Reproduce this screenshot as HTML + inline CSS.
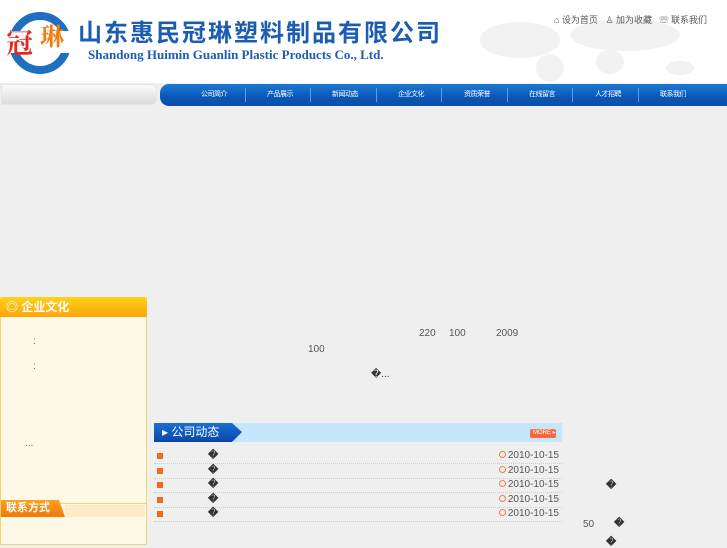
<!DOCTYPE html>
<html><head><meta charset="utf-8"><style>
*{margin:0;padding:0;box-sizing:border-box}
body{width:727px;height:545px;overflow:hidden;background:#efefef;font-family:"Liberation Sans","Noto Sans CJK SC",sans-serif;position:relative;font-size:10px;color:#555}
.a{position:absolute}
#hdr{left:0;top:0;width:727px;height:83px;background:#fff}
.nav{left:160px;top:84px;width:567px;height:22px;border-radius:9px 0 0 9px;background:linear-gradient(#1a7bd4,#0a56b8 60%,#0b4fa8)}
.nav span{position:absolute;top:5px;color:#fff;font-size:7px;letter-spacing:-0.5px;line-height:12px;white-space:nowrap}
.sep{position:absolute;top:4px;width:1px;height:14px;background:#5f9de0}
.gl{left:1px;top:84px;width:156px;height:21px;border-radius:0 6px 6px 0;background:linear-gradient(#fafafa,#dcdcdc);border:1px solid #e6e6e6}
.dots{border-bottom:1px dotted #ccc}
.row{position:absolute;left:154px;width:408px;height:15px}
.sq{position:absolute;left:3px;top:4px;width:6px;height:6px;background:#f06a1d}
.q{position:absolute;left:54px;top:1px;font-size:10px;color:#333;font-weight:bold;line-height:12px}
.dt{position:absolute;right:3px;top:1px;color:#555;font-size:10px;line-height:12px}
.dt:before{content:"";display:inline-block;width:5px;height:5px;border:1px solid #f08040;border-radius:50%;margin-right:2px}
</style></head><body>
<div id="hdr" class="a"></div>
<svg class="a" style="left:440px;top:10px" width="287" height="72"><g fill="#f2f2f2"><ellipse cx="80" cy="30" rx="40" ry="18"/><ellipse cx="110" cy="58" rx="14" ry="14"/><ellipse cx="185" cy="25" rx="55" ry="16"/><ellipse cx="170" cy="52" rx="14" ry="12"/><ellipse cx="240" cy="58" rx="14" ry="7"/></g></svg>
<svg class="a" style="left:8px;top:11px" width="64" height="64"><circle cx="32" cy="32" r="27" fill="none" stroke="#1e6fc0" stroke-width="8"/><rect x="0" y="20" width="64" height="22" fill="#fff"/></svg>
<div class="a" style="left:6px;top:24px;font-size:27px;color:#e52a1c;font-weight:bold;font-family:'Noto Serif CJK SC',serif;line-height:36px">冠</div>
<div class="a" style="left:40px;top:19px;font-size:24px;color:#f07d12;font-weight:bold;font-family:'Noto Serif CJK SC',serif;line-height:32px">琳</div>
<div class="a" style="left:78px;top:15px;font-size:24px;color:#1b5db3;font-weight:bold;letter-spacing:2px;line-height:32px;font-family:'Noto Sans CJK SC',sans-serif;white-space:nowrap">山东惠民冠琳塑料制品有限公司</div>
<div class="a" style="left:88px;top:47px;font-size:13px;color:#1b5db3;font-weight:bold;font-family:'Liberation Serif',serif;white-space:nowrap">Shandong Huimin Guanlin Plastic Products Co., Ltd.</div>
<div class="a" style="left:554px;top:14px;font-size:9px;color:#555;white-space:nowrap;line-height:12px">⌂ 设为首页 &nbsp; ♙ 加为收藏 &nbsp; ☏ 联系我们</div>
<div class="a gl"></div>
<div class="a nav">
<span style="left:41px">公司简介</span><div class="sep" style="left:85px"></div>
<span style="left:107px">产品展示</span><div class="sep" style="left:150px"></div>
<span style="left:172px">新闻动态</span><div class="sep" style="left:216px"></div>
<span style="left:238px">企业文化</span><div class="sep" style="left:281px"></div>
<span style="left:304px">资质荣誉</span><div class="sep" style="left:347px"></div>
<span style="left:369px">在线留言</span><div class="sep" style="left:412px"></div>
<span style="left:435px">人才招聘</span><div class="sep" style="left:478px"></div>
<span style="left:500px">联系我们</span>
</div>
<div class="a" style="left:0;top:297px;width:147px;height:248px;background:#fef8e6;border:1px solid #f6d36a;border-top:none"></div>
<div class="a" style="left:0;top:297px;width:147px;height:20px;background:linear-gradient(#ffd21a,#fca40a);border-radius:3px 3px 0 0;color:#fff;font-size:12px;font-weight:bold;padding:2px 0 0 6px;line-height:16px">◎ 企业文化</div>
<div class="a" style="left:33px;top:336px;color:#666">:</div>
<div class="a" style="left:33px;top:361px;color:#666">:</div>
<div class="a" style="left:25px;top:438px;color:#666">...</div>
<div class="a" style="left:1px;top:503px;width:145px;height:1px;background:#f6d36a"></div>
<div class="a" style="left:1px;top:500px;width:64px;height:17px;background:linear-gradient(#ffa020,#f07a08);clip-path:polygon(0 0,58px 0,64px 17px,0 17px);color:#fff;font-size:11px;font-weight:bold;padding:1px 0 0 5px;line-height:14px">联系方式</div>
<div class="a" style="left:65px;top:505px;width:80px;height:12px;background:#fcebc8"></div>
<div class="a" style="left:419px;top:328px">220</div>
<div class="a" style="left:449px;top:328px">100</div>
<div class="a" style="left:496px;top:328px">2009</div>
<div class="a" style="left:308px;top:344px">100</div>
<div class="a" style="left:371px;top:369px;color:#333">�...</div>
<div class="a" style="left:154px;top:423px;width:408px;height:19px;background:#c5e6fb"></div>
<div class="a" style="left:154px;top:423px;width:88px;height:19px;background:linear-gradient(#1a6fd4,#0a47a8);clip-path:polygon(0 0,78px 0,88px 9px,78px 19px,0 19px);color:#fff;font-size:12px;padding:2px 0 0 8px;line-height:15px">▸ 公司动态</div>
<div class="a" style="left:530px;top:429px;width:26px;height:9px;background:#f56b3e;border-radius:2px;color:#fff;font-size:6px;line-height:9px;padding-left:3px">MORE ▸</div>
<div class="row dots" style="top:449px"><div class="sq"></div><div class="q">�</div><div class="dt">2010-10-15</div></div>
<div class="row dots" style="top:464px"><div class="sq"></div><div class="q">�</div><div class="dt">2010-10-15</div></div>
<div class="row dots" style="top:478px"><div class="sq"></div><div class="q">�</div><div class="dt">2010-10-15</div></div>
<div class="row dots" style="top:493px"><div class="sq"></div><div class="q">�</div><div class="dt">2010-10-15</div></div>
<div class="row dots" style="top:507px"><div class="sq"></div><div class="q">�</div><div class="dt">2010-10-15</div></div>
<div class="a" style="left:606px;top:480px;color:#333;font-weight:bold">�</div>
<div class="a" style="left:583px;top:519px">50</div>
<div class="a" style="left:614px;top:518px;color:#333;font-weight:bold">�</div>
<div class="a" style="left:606px;top:537px;color:#333;font-weight:bold">�</div>
</body></html>
